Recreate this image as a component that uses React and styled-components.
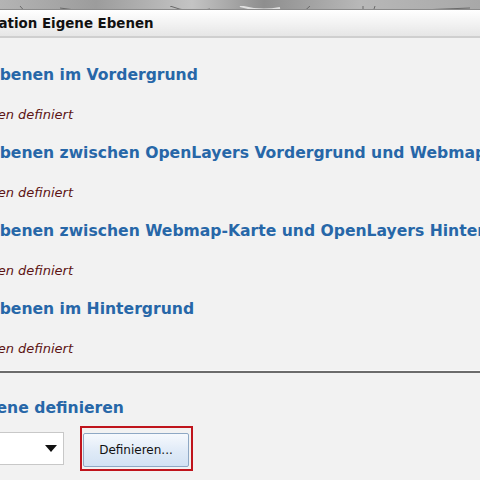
import React from "react";
import styled, { createGlobalStyle } from "styled-components";

const Global = createGlobalStyle`
  html, body { margin: 0; padding: 0; background: #f2f2f2; }
  body { width: 480px; height: 480px; overflow: hidden; font-family: "DejaVu Sans", Verdana, sans-serif; }
`;

const Page = styled.div`
  width: 480px;
  height: 480px;
  overflow: hidden;
  background: #f2f2f2;
  display: flex;
  flex-direction: column;
`;

const MapStrip = styled.div`
  height: 9px;
  flex: none;
  background: linear-gradient(90deg, #b4b4b4 0%, #9c9c9c 20%, #c4c4c4 40%, #8e8e8e 55%, #b8b8b8 75%, #a8a8a8 100%);
  border-bottom: 1px solid #8a8a8a;
  overflow: hidden;
`;

const TitleBar = styled.div`
  height: 26px;
  flex: none;
  background: linear-gradient(#ffffff, #e6e6e6);
  border-bottom: 2px solid #cfcfcf;
  display: flex;
  align-items: center;
  overflow: hidden;
`;

const Title = styled.h1`
  margin: 0 0 0 -66px;
  font-size: 13.4px;
  font-weight: bold;
  color: #111;
  white-space: nowrap;
`;

const Body = styled.div`
  display: flex;
  flex-direction: column;
  margin-left: ${p => p.$shift}px;
  padding-top: 18px;
  white-space: nowrap;
`;

const Section = styled.div`
  display: flex;
  flex-direction: column;
`;

const Heading = styled.h2`
  margin: 0 0 0 ${p => p.$indent || 0}px;
  height: 39px;
  line-height: 39px;
  font-size: 15.6px;
  font-weight: bold;
  color: #2767a8;
`;

const Empty = styled.p`
  margin: 0 0 0 ${p => p.$indent}px;
  height: 39px;
  line-height: 39px;
  font-size: 13px;
  font-style: italic;
  color: #5c1414;
`;

const Separator = styled.div`
  height: 2px;
  background: #6c6c6c;
  border-top: 1px solid #fafafa;
  margin: 2px 0 0 0;
  width: 600px;
`;

const NewHeading = styled(Heading)`
  margin-top: 17px;
  height: 36px;
  line-height: 36px;
`;

const Controls = styled.div`
  display: flex;
  align-items: center;
  gap: 16px;
  margin-top: 0;
`;

const Select = styled.div`
  width: 75px;
  height: 33px;
  box-sizing: border-box;
  background: #fff;
  border: 1px solid #c8c8c8;
  display: flex;
  align-items: center;
  justify-content: flex-end;
  padding-right: 6px;
`;

const Highlight = styled.div`
  border: 2px solid #c0141c;
  padding: 5px 2px 2px 1px;
`;

const Button = styled.button`
  width: 106px;
  height: 34px;
  box-sizing: border-box;
  border: 1px solid #8ea8c4;
  border-radius: 2px;
  background: linear-gradient(#f6f9fd, #dfeaf7 55%, #d3e2f3);
  font-family: "DejaVu Sans", Tahoma, sans-serif;
  font-size: 12px;
  color: #111;
  padding: 0;
  display: block;
`;

const sections = [
  "Ebenen im Vordergrund",
  "Ebenen zwischen OpenLayers Vordergrund und Webmap-Karte",
  "Ebenen zwischen Webmap-Karte und OpenLayers Hintergrund",
  "Ebenen im Hintergrund",
];

export default function App() {
  return (
    <Page>
      <Global />
      <MapStrip>
        <svg width="480" height="9" viewBox="0 0 480 9">
          <path d="M20 0 L28 9 M60 2 L90 6 M170 0 Q190 8 210 3 M300 9 L310 0 M363 0 L363 9 M375 0 L372 9 M420 4 L470 2" stroke="#6a6a6a" strokeWidth="1" fill="none" />
          <path d="M120 9 Q150 0 180 9 M240 0 Q260 6 280 2" stroke="#e0e0e0" strokeWidth="2" fill="none" />
        </svg>
      </MapStrip>
      <TitleBar>
        <Title>Konfiguration Eigene Ebenen</Title>
      </TitleBar>
      <Body $shift={-11}>
        {sections.map((s) => (
          <Section key={s}>
            <Heading>{s}</Heading>
            <Empty $indent={-64}>Keine Ebenen definiert</Empty>
          </Section>
        ))}
        <Separator />
        <NewHeading $indent={-65}>Neue Ebene definieren</NewHeading>
        <Controls>
          <Select>
            <svg width="12" height="7" viewBox="0 0 12 7"><path d="M0 0 H12 L6 7 Z" fill="#111" /></svg>
          </Select>
          <Highlight>
            <Button>Definieren...</Button>
          </Highlight>
        </Controls>
      </Body>
    </Page>
  );
}
